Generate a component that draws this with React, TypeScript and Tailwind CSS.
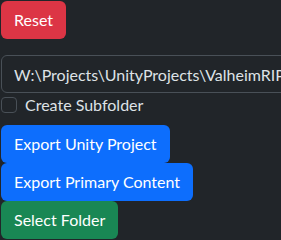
import { useState } from "react"

export default function App() {
  const [subfolder, setSubfolder] = useState(false)
  const [path, setPath] = useState("W:\\Projects\\UnityProjects\\ValheimRIP")

  const btn =
    "block h-[38px] rounded-[6px] border border-transparent px-3 text-[16px] leading-[24px] text-white"

  return (
    <div className="min-h-screen overflow-hidden bg-[#212529] p-px font-['Lato',sans-serif] text-[#dee2e6]">
      <button className={`${btn} bg-[#dc3545]`}>Reset</button>

      <div className="mt-4">
        <input
          value={path}
          onChange={(e) => setPath(e.target.value)}
          className="block h-[38px] w-[320px] rounded-[6px] border border-[#495057] bg-[#212529] px-3 text-[16px] text-[#dee2e6] outline-none"
        />
        <label className="flex h-6 items-center">
          <input
            type="checkbox"
            checked={subfolder}
            onChange={(e) => setSubfolder(e.target.checked)}
            className="h-4 w-4 appearance-none rounded-[4px] border border-[#495057] bg-[#212529]"
          />
          <span className="ml-2 text-[16px]">Create Subfolder</span>
        </label>
      </div>

      <div className="mt-2">
        <button className={`${btn} bg-[#0d6efd]`}>Export Unity Project</button>
        <button className={`${btn} bg-[#0d6efd]`}>Export Primary Content</button>
        <button className={`${btn} bg-[#198754]`}>Select Folder</button>
      </div>
    </div>
  )
}
